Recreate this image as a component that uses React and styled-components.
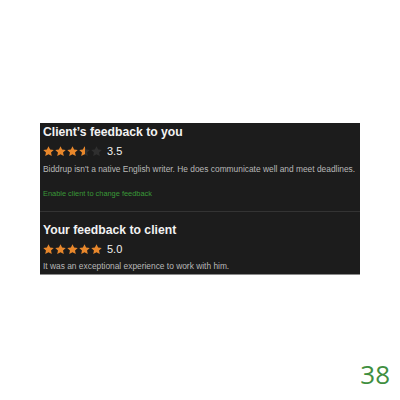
import React from "react";
import styled, { createGlobalStyle } from "styled-components";

const Global = createGlobalStyle`
  html, body { margin: 0; padding: 0; background: #fff; }
  body { width: 400px; height: 400px; font-family: "Liberation Sans", Arial, sans-serif; }
`;

const Page = styled.div`
  width: 400px;
  height: 400px;
  display: flex;
  flex-direction: column;
  padding-top: 123px;
  box-sizing: border-box;
`;

const Panel = styled.div`
  margin-left: 40px;
  width: 320px;
  background: #1c1c1c;
  border-bottom: 1px solid #8a8a8a;
  display: flex;
  flex-direction: column;
`;

const Section = styled.div`
  padding: ${(p) => p.$pad};
  display: flex;
  flex-direction: column;
`;

const Divider = styled.div`
  height: 1px;
  background: #333;
`;

const Title = styled.div`
  color: #f2f2f2;
  font-size: 12.2px;
  font-weight: 700;
  line-height: 14px;
`;

const RatingRow = styled.div`
  display: flex;
  align-items: center;
  gap: 1px;
  margin-top: 5px;
  height: 14px;
`;

const Score = styled.span`
  color: #f0f0f0;
  font-size: 11px;
  margin-left: 4px;
`;

const Body = styled.div`
  color: #b8b8b8;
  font-size: 8.4px;
  margin-top: ${(p) => p.$mt}px;
  line-height: 10px;
  white-space: nowrap;
`;

const Link = styled.div`
  color: #3a9a38;
  font-size: 7.4px;
  margin-top: 15px;
  line-height: 9px;
`;

const PageNumber = styled.div`
  margin-top: auto;
  align-self: flex-end;
  margin-right: 10px;
  margin-bottom: 11px;
  color: #3f8f3f;
  font-family: "Open Sans", "DejaVu Sans", sans-serif;
  font-size: 26px;
  line-height: 30px;
`;

const STAR = "M6 0.3l1.75 3.6 3.95.45-2.95 2.7.85 3.95L6 9.05 2.4 11l.85-3.95L.3 4.35l3.95-.45z";

function Star({ fill, id }) {
  return (
    <svg width="11" height="11" viewBox="0 0 12 12">
      <defs>
        <linearGradient id={id}>
          <stop offset={fill} stopColor="#e8872b" />
          <stop offset={fill} stopColor="#2f2f2f" />
        </linearGradient>
      </defs>
      <path d={STAR} fill={`url(#${id})`} />
    </svg>
  );
}

function Rating({ value, name }) {
  return (
    <RatingRow>
      {[0, 1, 2, 3, 4].map((i) => (
        <Star key={i} id={`${name}-star-${i}`} fill={Math.max(0, Math.min(1, value - i))} />
      ))}
      <Score>{value.toFixed(1)}</Score>
    </RatingRow>
  );
}

export default function App() {
  return (
    <>
      <Global />
      <Page>
        <Panel>
          <Section $pad="2px 3px 13px 3px">
            <Title>Client’s feedback to you</Title>
            <Rating value={3.5} name="client" />
            <Body $mt={6}>Biddrup isn't a native English writer. He does communicate well and meet deadlines.</Body>
            <Link>Enable client to change feedback</Link>
          </Section>
          <Divider />
          <Section $pad="11px 3px 3px 3px">
            <Title>Your feedback to client</Title>
            <Rating value={5} name="own" />
            <Body $mt={5}>It was an exceptional experience to work with him.</Body>
          </Section>
        </Panel>
        <PageNumber>38</PageNumber>
      </Page>
    </>
  );
}
